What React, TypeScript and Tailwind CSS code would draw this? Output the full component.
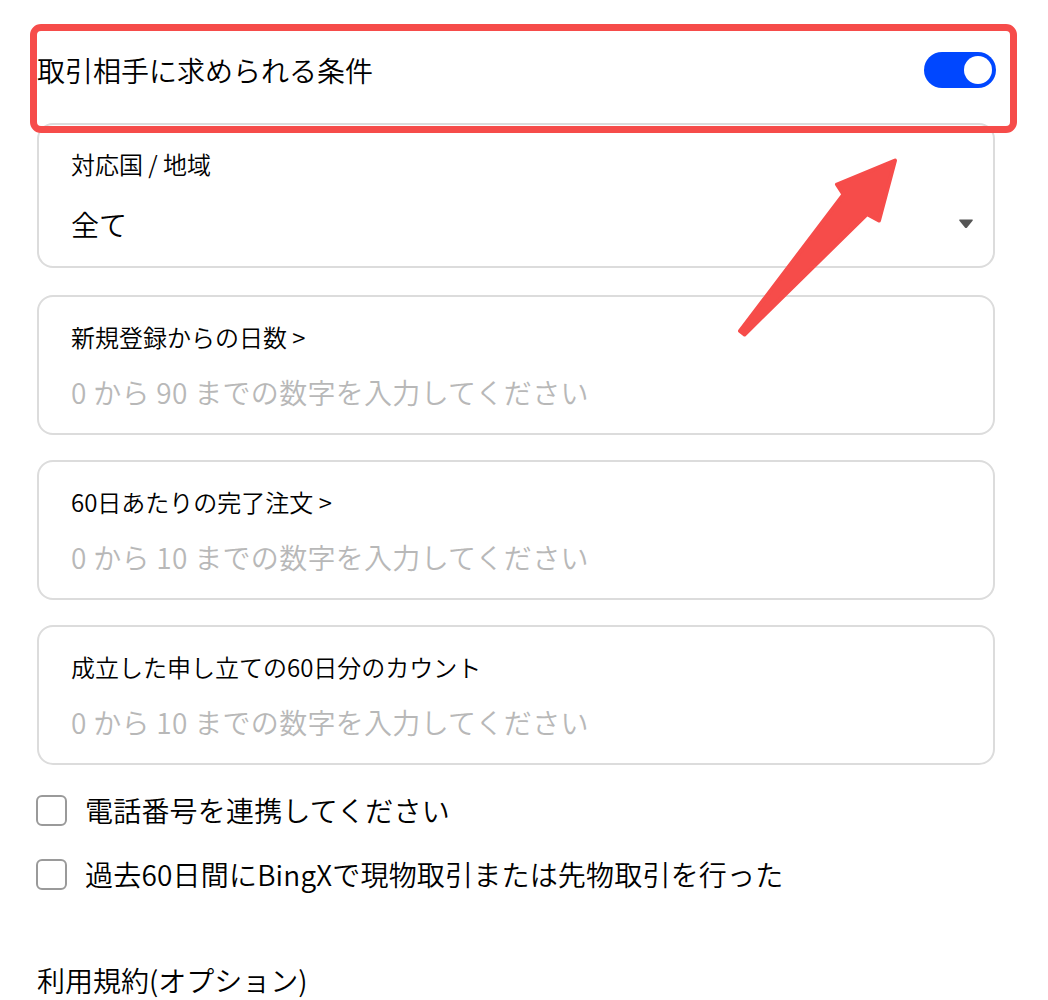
import React from "react";

const FONT = '"Noto Sans CJK JP", "Noto Sans", sans-serif';

function InputCard({ label, placeholder, mt }: { label: string; placeholder: string; mt: string }) {
  return (
    <div className={`${mt} h-[140px] rounded-[16px] border-2 border-[#dcdcdc] pl-[32px] pt-[24px]`}>
      <div className="text-[24px] font-[350] leading-[32px] text-[#000]">{label}</div>
      <div className="mt-[21px] text-[28px] font-[350] leading-[36px] tracking-[0.3px] text-[#b8b8b8]">{placeholder}</div>
    </div>
  );
}

function Checkbox({ label, mt }: { label: string; mt: string }) {
  return (
    <div className={`${mt} -ml-[1px] flex h-[32px] items-center gap-[18px]`}>
      <div className="h-[31px] w-[31px] shrink-0 rounded-[6px] border-2 border-[#9a9a9a] bg-white" />
      <div className="text-[28px] font-[350] leading-[36px] tracking-[0.2px] text-[#000]">{label}</div>
    </div>
  );
}

export default function App() {
  return (
    <div className="relative h-[1000px] w-[1048px] overflow-hidden bg-white" style={{ fontFamily: FONT }}>
      <div className="ml-[37px] w-[958px] pt-[35px]">
        {/* Title row */}
        <div className="flex h-[70px] items-center justify-between">
          <div className="text-[28px] font-[350] leading-[40px] text-[#000]">取引相手に求められる条件</div>
          <div className="-mr-[1px] flex h-[36px] w-[72px] items-center justify-end rounded-full bg-[#0047ff] p-[4px]">
            <div className="h-[28px] w-[28px] rounded-full bg-white" />
          </div>
        </div>

        {/* Country card */}
        <div className="mt-[18px] h-[145px] rounded-[16px] border-2 border-[#dcdcdc] pl-[32px] pr-[19px] pt-[23px]">
          <div className="text-[24px] font-[350] leading-[32px] text-[#000]">対応国 / 地域</div>
          <div className="mt-[26px] flex h-[36px] items-center justify-between">
            <div className="text-[28px] font-[350] leading-[36px] text-[#000]">全て</div>
            <svg width="16" height="11" viewBox="0 0 16 11" className="mt-[-1px]">
              <path d="M2 1.5 H14 Q15.5 1.5 14.6 2.8 L9.1 9.4 Q8 10.6 6.9 9.4 L1.4 2.8 Q0.5 1.5 2 1.5 Z" fill="#555" />
            </svg>
          </div>
        </div>

        <InputCard mt="mt-[27px]" label="新規登録からの日数 >" placeholder="0 から 90 までの数字を入力してください" />
        <InputCard mt="mt-[25px]" label="60日あたりの完了注文 >" placeholder="0 から 10 までの数字を入力してください" />
        <InputCard mt="mt-[25px]" label="成立した申し立ての60日分のカウント" placeholder="0 から 10 までの数字を入力してください" />

        <Checkbox mt="mt-[29px]" label="電話番号を連携してください" />
        <Checkbox mt="mt-[32px]" label="過去60日間にBingXで現物取引または先物取引を行った" />

        <div className="mt-[70px] text-[28px] font-[350] leading-[40px] text-[#000]">利用規約(オプション)</div>
      </div>

      {/* Annotation: red highlight box */}
      <div className="pointer-events-none absolute left-[30px] top-[24px] h-[109px] w-[987px] rounded-[11px] border-[7px] border-[#f64c4a]" />

      {/* Annotation: red arrow */}
      <svg className="pointer-events-none absolute left-0 top-0" width="1048" height="1000" viewBox="0 0 1048 1000">
        <polygon
          points="895,160.5 879,220.5 867,214 744.5,334.5 740,331 843.5,194.5 837,184.5"
          fill="#f64c4a"
          stroke="#f64c4a"
          strokeWidth="4"
          strokeLinejoin="round"
        />
      </svg>
    </div>
  );
}
